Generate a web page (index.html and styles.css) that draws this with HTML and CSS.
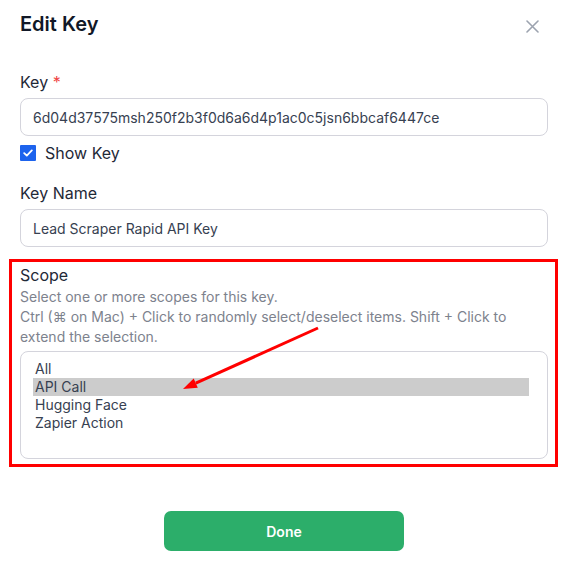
FILE: index.html
```html
<!DOCTYPE html>
<html lang="en">
<head>
  <meta charset="UTF-8" />
  <meta name="viewport" content="width=device-width, initial-scale=1.0" />
  <title>Edit Key</title>
  <link rel="stylesheet" href="styles.css">
</head>
<body>
  <div class="dialog">
    <div class="dialog-header">
      <h2>Edit Key</h2>
      <button class="close-btn" aria-label="Close">
        <svg width="13" height="13" viewBox="0 0 13 13">
          <path d="M1 1L12 12M12 1L1 12" stroke="#9ca3af" stroke-width="1.6" stroke-linecap="round" fill="none" />
        </svg>
      </button>
    </div>

    <div class="field">
      <label class="field-label" for="key">Key <span class="required">*</span></label>
      <input class="text-input" id="key" type="text" value="6d04d37575msh250f2b3f0d6a6d4p1ac0c5jsn6bbcaf6447ce">
      <label class="check-row">
        <input type="checkbox" checked>
        <span class="check-box">
          <svg width="10" height="8" viewBox="0 0 10 8">
            <path d="M1.2 4.2L3.8 6.6L8.8 1.4" stroke="#fff" stroke-width="1.8" fill="none" stroke-linecap="round" stroke-linejoin="round" />
          </svg>
        </span>
        <span>Show Key</span>
      </label>
    </div>

    <div class="field">
      <label class="field-label" for="keyName">Key Name</label>
      <input class="text-input" id="keyName" type="text" value="Lead Scraper Rapid API Key">
    </div>

    <div class="field scope">
      <div class="highlight"></div>
      <div class="field-label">Scope</div>
      <p class="help">Select one or more scopes for this key.<br>Ctrl (⌘ on Mac) + Click to randomly select/deselect items. Shift + Click to extend the selection.</p>
      <ul class="listbox" role="listbox" aria-multiselectable="true">
        <li role="option">All</li>
        <li role="option" class="selected" aria-selected="true">API Call</li>
        <li role="option">Hugging Face</li>
        <li role="option">Zapier Action</li>
      </ul>
    </div>

    <div class="actions">
      <button class="done-btn">Done</button>
    </div>

    <!-- annotation arrow -->
    <svg class="arrow" width="567" height="571" viewBox="0 0 567 571">
      <line x1="318" y1="328" x2="195.8" y2="383.2" stroke="#ff0000" stroke-width="3" />
      <polygon points="183,389 197.8,387.8 193.7,378.6" fill="#ff0000" />
    </svg>
  </div>
</body>
</html>
```

FILE: styles.css
```css
* {
  box-sizing: border-box;
  margin: 0;
  padding: 0;
  font-family: "Inter", "Liberation Sans", sans-serif;
}

body {
  background: #fff;
  color: #1f2937;
}

.dialog {
  position: relative;
  width: 567px;
  height: 571px;
  padding: 10px 19px 0 20px;
}

.dialog-header {
  display: flex;
  justify-content: space-between;
  align-items: center;
}

.dialog-header h2 {
  font-size: 20px;
  line-height: 28px;
  font-weight: 600;
  color: #111827;
}

.close-btn {
  background: none;
  border: none;
  width: 13px;
  height: 13px;
  margin: 4px 9px 0 0;
  cursor: pointer;
  display: flex;
}

.field {
  margin-top: 16px;
}

.dialog-header + .field {
  margin-top: 32px;
}

.field-label {
  display: block;
  font-size: 16px;
  line-height: 24px;
  color: #1f2937;
  margin-bottom: 4px;
}

.required {
  color: #ef4444;
}

.text-input {
  display: block;
  width: 100%;
  height: 38px;
  border: 1px solid #d4d4dc;
  border-radius: 8px;
  padding: 0 12px;
  font-size: 14px;
  color: #374151;
  outline: none;
}

.check-row {
  display: flex;
  align-items: center;
  gap: 9px;
  margin-top: 5px;
  height: 24px;
  font-size: 16px;
  color: #1f2937;
  cursor: pointer;
}

.check-row input {
  display: none;
}

.check-box {
  width: 16px;
  height: 16px;
  border-radius: 1px;
  background: #1d63ed;
  display: flex;
  align-items: center;
  justify-content: center;
}

.scope {
  position: relative;
}

.scope .field-label {
  margin-bottom: 0;
}

.highlight {
  position: absolute;
  top: -4px;
  left: -11px;
  right: -10px;
  bottom: -8px;
  border: 3px solid #ff0000;
  pointer-events: none;
}

.help {
  font-size: 14px;
  line-height: 20px;
  color: #7d828d;
}

.listbox {
  list-style: none;
  margin-top: 4px;
  height: 108px;
  border: 1px solid #d4d4dc;
  border-radius: 8px;
  padding: 8px 18px 8px 12px;
}

.listbox li {
  font-size: 14px;
  line-height: 18px;
  padding: 0 2px;
  color: #374151;
}

.listbox li.selected {
  background: #cccccc;
}

.actions {
  display: flex;
  justify-content: center;
  margin-top: 52px;
}

.done-btn {
  width: 240px;
  height: 40px;
  border: none;
  border-radius: 7px;
  background: #2cae6a;
  color: #fff;
  font-size: 14px;
  font-weight: 600;
  cursor: pointer;
}

.arrow {
  position: absolute;
  top: 0;
  left: 0;
  pointer-events: none;
}
```
